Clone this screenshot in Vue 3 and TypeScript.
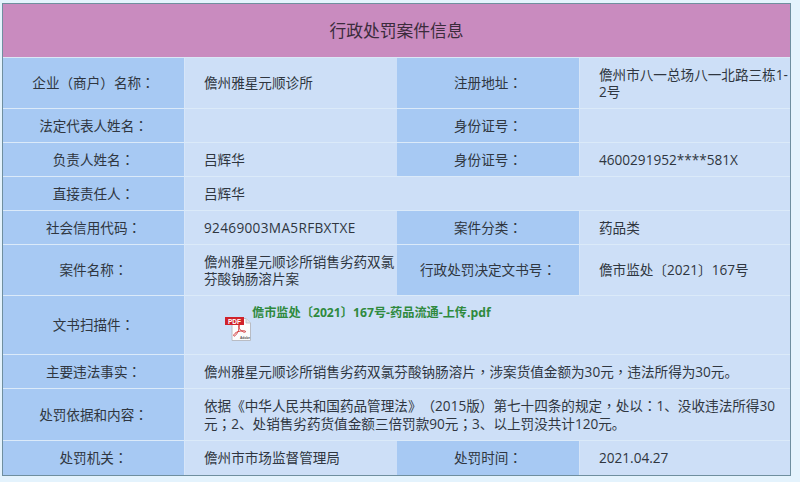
<script setup lang="ts">
import { h } from 'vue'

interface Row { h: number; cells: [string, string, string?, string?]; codeCell?: boolean }
const rows: Row[] = [
  { h: 51, cells: ['企业（商户）名称：', '儋州雅星元顺诊所', '注册地址：', '儋州市八一总场八一北路三栋1-2号'] },
  { h: 34, cells: ['法定代表人姓名：', '', '身份证号：', ''] },
  { h: 34, cells: ['负责人姓名：', '吕辉华', '身份证号：', '4600291952****581X'] },
  { h: 34, cells: ['直接责任人：', '吕辉华'] },
  { h: 34, cells: ['社会信用代码：', '92469003MA5RFBXTXE', '案件分类：', '药品类'], codeCell: true },
  { h: 51, cells: ['案件名称：', '儋州雅星元顺诊所销售劣药双氯芬酸钠肠溶片案', '行政处罚决定文书号：', '儋市监处〔2021〕167号'] },
]
const tail: Row[] = [
  { h: 34, cells: ['主要违法事实：', '儋州雅星元顺诊所销售劣药双氯芬酸钠肠溶片，涉案货值金额为30元，违法所得为30元。'] },
  { h: 52, cells: ['处罚依据和内容：', '依据《中华人民共和国药品管理法》（2015版）第七十四条的规定，处以：1、没收违法所得30元；2、处销售劣药货值金额三倍罚款90元；3、以上罚没共计120元。'] },
]

// The reference centres these marks in their full-width box, as the TC font does.
const Txt = (props: { t?: string }) =>
  (props.t ?? '')
    .split(/([（），：；])/)
    .filter(Boolean)
    .map((s) => (/^[（），：；]$/.test(s) ? h('span', { class: 'punct' }, s) : s))
Txt.props = ['t']
</script>

<template>
  <div class="page">
    <table class="info">
      <colgroup>
        <col class="c1" /><col class="c2" /><col class="c3" /><col class="c4" />
      </colgroup>
      <tbody>
        <tr class="head"><th colspan="4">行政处罚案件信息</th></tr>
        <tr v-for="r in rows" :key="r.cells[0]" :style="{ height: r.h + 'px' }">
          <td class="label"><Txt :t="r.cells[0]" /></td>
          <td class="value" :class="{ code: r.codeCell }" :colspan="r.cells[2] ? 1 : 3"><Txt :t="r.cells[1]" /></td>
          <template v-if="r.cells[2]">
            <td class="label"><Txt :t="r.cells[2]" /></td>
            <td class="value"><Txt :t="r.cells[3]" /></td>
          </template>
        </tr>
        <tr class="doc">
          <td class="label"><Txt t="文书扫描件：" /></td>
          <td class="value" colspan="3">
            <div class="file">
              <svg class="pdf" viewBox="0 0 28 27" width="28" height="27" aria-hidden="true">
                <path d="M8 3.500h14l4.500 4.500v17.500H8z" fill="#fcfcfc" stroke="#b9bcc4" stroke-width="1" />
                <path d="M22 3.500v4.500h4.500" fill="#e3e5ea" stroke="#b9bcc4" stroke-width="0.800" />
                <rect x="1" y="2" width="19" height="8" fill="#d0222a" />
                <text x="10.500" y="8.600" class="pdf-word">PDF</text>
                <path d="M15 10c-1 3 1 5 3.500 6.500 1.500 1 3.500 1 3-.2-.5-1-6-.5-9 1-2 1-3.500 3.300-2.500 3.800 1 .5 3.500-3 4.500-5.600.6-2.300 1-5.500.5-5.500z" fill="none" stroke="#d23a3c" stroke-width="1" />
                <text x="16" y="24.200" class="adobe">Adobe</text>
              </svg>
              <a class="link">儋市监处〔2021〕167号-药品流通-上传.pdf</a>
            </div>
          </td>
        </tr>
        <tr v-for="r in tail" :key="r.cells[0]" :style="{ height: r.h + 'px' }">
          <td class="label"><Txt :t="r.cells[0]" /></td>
          <td class="value" colspan="3"><Txt :t="r.cells[1]" /></td>
        </tr>
        <tr class="last">
          <td class="label"><Txt t="处罚机关：" /></td>
          <td class="value">儋州市市场监督管理局</td>
          <td class="label"><Txt t="处罚时间：" /></td>
          <td class="value">2021.04.27</td>
        </tr>
      </tbody>
    </table>
  </div>
</template>

<style>
html, body { margin: 0; background: #e4f3fd; }
.punct { font-family: "Noto Sans CJK TC", sans-serif; }
</style>

<style scoped>
.page {
  width: 800px;
  height: 482px;
  padding: 3px 0 0 2px;
  box-sizing: border-box;
  overflow: hidden;
  background: #e4f3fd;
  font-family: "Open Sans", "Noto Sans CJK SC", sans-serif;
  font-size: 13.600px;
  line-height: 17.500px;
  color: #2f3640;
  text-spacing-trim: space-all;
}
.info {
  width: 789px;
  table-layout: fixed;
  border-collapse: separate;
  border-spacing: 0;
  border: 1px solid #6f8f9f;
  background: #cddff7;
}
.c1 { width: 181px; }
.c2 { width: 213px; }
.c3 { width: 182px; }
.c4 { width: 211px; }
td, th { padding: 0; box-sizing: border-box; }
.head th {
  height: 54px;
  background: #c98bbf;
  font-size: 16.800px;
  font-weight: 400;
  color: #3b2c3c;
  text-align: center;
  border-bottom: 1px solid #dbe7f6;
}
.label {
  background: #a7c9f3;
  text-align: center;
  border-bottom: 1px solid #dbeaf9;
}
.value {
  background: #cddff7;
  padding: 0 0 0 19px;
  border-bottom: 1px solid #dbeaf9;
  border-left: 1px solid #d6e5f8;
}
.code { letter-spacing: 0.330px; }
tr.last td { border-bottom: 0; height: 34px; }
tr.doc { height: 59px; }
tr.doc .value { vertical-align: top; }
.file {
  display: flex;
  align-items: flex-start;
  margin-left: 20px;
}
.pdf { margin-top: 19px; flex: none; }
.link {
  margin: 8px 0 0 0;
  font-size: 12.200px;
  font-weight: 700;
  color: #2f8a3e;
  white-space: nowrap;
}
.pdf-word {
  font-family: "Liberation Sans", sans-serif;
  font-size: 6.500px;
  font-weight: 700;
  fill: #ffffff;
  text-anchor: middle;
}
.adobe {
  font-family: "Liberation Sans", sans-serif;
  font-size: 3.200px;
  font-weight: 700;
  fill: #555555;
}
</style>
